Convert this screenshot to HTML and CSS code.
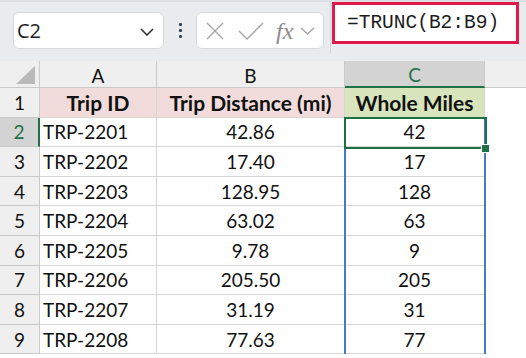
FILE: index.html
```html
<!DOCTYPE html>
<html lang="en">
<head>
    <meta charset="UTF-8">
    <title>Trip Distances</title>
    <link rel="stylesheet" href="styles.css">
</head>
<body>
    <div class="toolbar">
        <div class="name-box">
            <span>C2</span>
            <svg class="chev" width="14" height="8" viewBox="0 0 14 8"><polyline points="1,1 7,7 13,1" fill="none" stroke="#333" stroke-width="1.6"/></svg>
        </div>
        <div class="dots"><i></i><i></i><i></i></div>
        <div class="fx-box">
            <svg width="18" height="18" viewBox="0 0 18 18"><path d="M1 1 L17 17 M17 1 L1 17" stroke="#a6a6a6" stroke-width="1.4" fill="none"/></svg>
            <svg width="26" height="18" viewBox="0 0 26 18"><polyline points="1,9 9,17 25,1" fill="none" stroke="#a6a6a6" stroke-width="1.4"/></svg>
            <span class="fx">fx</span>
            <svg width="15" height="8" viewBox="0 0 15 8"><polyline points="1,1 7.5,7 14,1" fill="none" stroke="#a6a6a6" stroke-width="1.4"/></svg>
        </div>
        <div class="formula">
            <div class="formula-input">=TRUNC(B2:B9)</div>
        </div>
    </div>

    <div class="sheet">
        <div class="grid">
            <div class="corner"><div class="tri"></div></div>
            <div class="col-head">A</div>
            <div class="col-head">B</div>
            <div class="col-head active">C</div>
            <div class="col-rest"></div>

            <div class="row-head">1</div>
            <div class="cell title pink">Trip ID</div>
            <div class="cell title pink">Trip Distance (mi)</div>
            <div class="cell title green">Whole Miles</div>
            <div class="rest"></div>

            <div class="row-head active">2</div>
            <div class="cell left">TRP-2201</div>
            <div class="cell">42.86</div>
            <div class="cell">42</div>
            <div class="rest"></div>

            <div class="row-head">3</div>
            <div class="cell left">TRP-2202</div>
            <div class="cell">17.40</div>
            <div class="cell">17</div>
            <div class="rest"></div>

            <div class="row-head">4</div>
            <div class="cell left">TRP-2203</div>
            <div class="cell">128.95</div>
            <div class="cell">128</div>
            <div class="rest"></div>

            <div class="row-head">5</div>
            <div class="cell left">TRP-2204</div>
            <div class="cell">63.02</div>
            <div class="cell">63</div>
            <div class="rest"></div>

            <div class="row-head">6</div>
            <div class="cell left">TRP-2205</div>
            <div class="cell">9.78</div>
            <div class="cell">9</div>
            <div class="rest"></div>

            <div class="row-head">7</div>
            <div class="cell left">TRP-2206</div>
            <div class="cell">205.50</div>
            <div class="cell">205</div>
            <div class="rest"></div>

            <div class="row-head">8</div>
            <div class="cell left">TRP-2207</div>
            <div class="cell">31.19</div>
            <div class="cell">31</div>
            <div class="rest"></div>

            <div class="row-head">9</div>
            <div class="cell left">TRP-2208</div>
            <div class="cell">77.63</div>
            <div class="cell">77</div>
            <div class="rest"></div>
        </div>
        <!-- selection overlays -->
        <div class="range"></div>
        <div class="selected"></div>
        <div class="handle"></div>
    </div>
</body>
</html>
```

FILE: styles.css
```css
body {
    margin: 0;
    background: #ffffff;
    overflow: hidden;
}

.toolbar {
    height: 61px;
    box-sizing: border-box;
    background: #e9ebee;
    border-top: 2px solid #dcdfe3;
    display: flex;
    align-items: flex-start;
    padding-top: 10px;
}

.name-box {
    margin-left: 13px;
    width: 151px;
    height: 37px;
    box-sizing: border-box;
    background: #ffffff;
    border: 1px solid #d6d8db;
    border-radius: 6px;
    display: flex;
    align-items: center;
    justify-content: space-between;
    padding: 0 9px 0 3px;
    font-family: "Open Sans", sans-serif;
    font-size: 20px;
    color: #1b1b1b;
}

.name-box .chev {
    margin-top: 2px;
}

.dots {
    width: 32px;
    height: 37px;
    display: flex;
    flex-direction: column;
    align-items: center;
    justify-content: center;
    gap: 3px;
}

.dots i {
    width: 3px;
    height: 3px;
    background: #33475b;
    border-radius: 1px;
}

.fx-box {
    width: 128px;
    height: 37px;
    box-sizing: border-box;
    background: #ffffff;
    border: 1px solid #d6d8db;
    border-radius: 6px;
    display: flex;
    align-items: center;
    padding-left: 9px;
    gap: 14px;
}

.fx-box .fx {
    font-family: "Liberation Serif", serif;
    font-style: italic;
    font-size: 24px;
    color: #8a8a8a;
    margin-left: -2px;
    margin-right: -7px;
    line-height: 1;
}

.formula {
    margin-left: 6px;
    margin-top: -10px;
    height: 51px;
    flex: 1;
    border-left: 1px solid #d3d6da;
    padding-left: 1px;
}

.formula-input {
    width: 187px;
    height: 42px;
    box-sizing: border-box;
    border: 3px solid #e0194b;
    background: #ffffff;
    font-family: "Liberation Mono", monospace;
    font-size: 19.5px;
    color: #1b1b1b;
    line-height: 36px;
    padding-left: 12px;
}

.sheet {
    position: relative;
}

.grid {
    display: grid;
    grid-template-columns: 40px 117px 188px 140px 1fr;
    grid-template-rows: 27px repeat(9, 29.6px);
    font-family: Lato, sans-serif;
    font-size: 19px;
    color: #111;
}

.grid > div {
    box-sizing: border-box;
    display: flex;
    align-items: center;
    justify-content: center;
}

.corner {
    background: #efefef;
    border-right: 1px solid #c9c9c9;
    border-bottom: 1px solid #c9c9c9;
    position: relative;
}

.tri {
    position: absolute;
    right: 4px;
    bottom: 3px;
    width: 0;
    height: 0;
    border-left: 19px solid transparent;
    border-bottom: 18px solid #b9b9b9;
}

.col-head {
    background: #efefef;
    border-right: 1px solid #c9c9c9;
    border-bottom: 1px solid #c9c9c9;
    padding-top: 2px;
}

.col-head.active {
    background: #d3d3d3;
    color: #1e7145;
    border-bottom: 2px solid #1e7145;
}

.col-rest {
    background: #efefef;
    border-bottom: 1px solid #c9c9c9;
}

.row-head {
    background: #efefef;
    border-right: 1px solid #c9c9c9;
    border-bottom: 1px solid #c9c9c9;
}

.row-head.active {
    background: #d3d3d3;
    color: #1e7145;
    border-right: 2px solid #1e7145;
}

.cell {
    border-right: 1px solid #d4d4d4;
    border-bottom: 1px solid #d4d4d4;
    background: #ffffff;
}

.cell.left {
    justify-content: flex-start;
    padding-left: 3px;
}

.cell.title {
    font-weight: 700;
    font-size: 21px;
}

.pink {
    background: #f2dcdb;
}

.green {
    background: #d8e4bc;
}

.range {
    position: absolute;
    left: 344px;
    top: 56px;
    width: 142px;
    height: 239px;
    box-sizing: border-box;
    border: 2px solid #4a78c2;
}

.selected {
    position: absolute;
    left: 344px;
    top: 55.6px;
    width: 143px;
    height: 32px;
    box-sizing: border-box;
    border: 2px solid #1e7145;
}

.handle {
    position: absolute;
    left: 481px;
    top: 83px;
    width: 7px;
    height: 7px;
    background: #1e7145;
    border: 1px solid #ffffff;
}
```
